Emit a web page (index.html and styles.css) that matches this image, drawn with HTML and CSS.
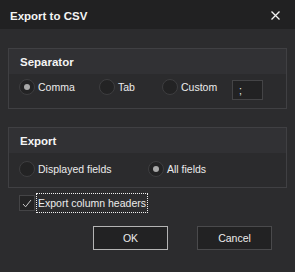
FILE: index.html
```html
<!DOCTYPE html>
<html>
<head>
<meta charset="utf-8">
<link rel="stylesheet" href="styles.css">
</head>
<body>
<div class="dialog">
  <div class="titlebar">
    <span class="title">Export to CSV</span>
    <svg class="close" width="9" height="9" viewBox="0 0 9 9"><path d="M0.5 0.5 L8.5 8.5 M8.5 0.5 L0.5 8.5" stroke="#f2f2f2" stroke-width="1.3" fill="none"/></svg>
  </div>
  <div class="content">
    <div class="group">
      <div class="group-head">Separator</div>
      <div class="group-body sep-body">
        <label class="opt w-comma"><span class="radio checked"></span><span>Comma</span></label>
        <label class="opt w-tab"><span class="radio"></span><span>Tab</span></label>
        <label class="opt w-custom"><span class="radio"></span><span>Custom</span></label>
        <span class="input">;</span>
      </div>
    </div>
    <div class="group group-export">
      <div class="group-head">Export</div>
      <div class="group-body exp-body">
        <label class="opt w-disp"><span class="radio"></span><span>Displayed fields</span></label>
        <label class="opt"><span class="radio checked"></span><span>All fields</span></label>
      </div>
    </div>
    <div class="check-row">
      <span class="checkbox"><svg width="10" height="9" viewBox="0 0 10 9"><path d="M1 5 L3.6 7.8 L9 1" stroke="#c8c8c8" stroke-width="1" fill="none"/></svg></span>
      <span class="focus">Export column headers</span>
    </div>
    <div class="buttons">
      <button class="btn btn-default">OK</button>
      <button class="btn">Cancel</button>
    </div>
  </div>
</div>
</body>
</html>
```
FILE: styles.css
```css
html, body {
  margin: 0;
  padding: 0;
  background: #2c2c2e;
}
body {
  width: 295px;
  height: 272px;
  overflow: hidden;
  font-family: "Liberation Sans", Arial, sans-serif;
  font-size: 10.5px;
  color: #ececec;
}
.titlebar {
  height: 29px;
  background: #212122;
  display: flex;
  align-items: center;
  justify-content: space-between;
  padding: 0 15px 0 10px;
  box-sizing: border-box;
}
.title {
  font-weight: bold;
  font-size: 11.5px;
  color: #f4f4f4;
  position: relative;
  top: 1px;
}
.close {
  display: block;
  position: relative;
  top: 1px;
}
.content {
  padding: 19px 8px 0 8px;
}
.group {
  border: 1px solid #404043;
  background: #2b2b2d;
}
.group-export {
  margin-top: 18px;
}
.group-head {
  height: 25px;
  background: #313134;
  font-weight: bold;
  font-size: 11.5px;
  color: #f4f4f4;
  display: flex;
  align-items: center;
  padding-left: 11px;
}
.group-body {
  display: flex;
  padding-left: 10px;
  box-sizing: border-box;
  height: 34px;
}
.sep-body {
  align-items: flex-start;
  padding-top: 5px;
}
.exp-body {
  align-items: flex-start;
  padding-top: 8px;
}
.opt {
  display: flex;
  align-items: center;
  gap: 3px;
  height: 16px;
}
.w-comma { width: 80px; }
.w-tab { width: 63px; }
.w-custom { width: 70px; }
.w-disp { width: 129px; }
.radio {
  width: 16px;
  height: 16px;
  box-sizing: border-box;
  border-radius: 50%;
  border: 1px solid #3e3e40;
  background: #232324;
  display: flex;
  align-items: center;
  justify-content: center;
}
.radio.checked::after {
  content: "";
  width: 6px;
  height: 6px;
  border-radius: 50%;
  background: #a9a9a9;
}
.input {
  width: 31px;
  height: 20px;
  box-sizing: border-box;
  border: 1px solid #444446;
  background: #222223;
  padding-left: 6px;
  line-height: 18px;
  margin-top: 1px;
}
.check-row {
  display: flex;
  align-items: center;
  padding-left: 11px;
  margin-top: 6px;
  gap: 2px;
}
.checkbox {
  width: 16px;
  height: 16px;
  box-sizing: border-box;
  border: 1px solid #444446;
  background: #232324;
  display: flex;
  align-items: center;
  justify-content: center;
}
.focus {
  outline: 1px dotted #f0f0f0;
  padding: 2px 1px 2px 1px;
  line-height: 14px;
}
.buttons {
  display: flex;
  justify-content: flex-end;
  gap: 29px;
  padding-right: 15px;
  margin-top: 14px;
}
.btn {
  width: 75px;
  height: 24px;
  background: #222223;
  border: 1px solid #4a4a4c;
  color: #ececec;
  font-family: "Liberation Sans", Arial, sans-serif;
  font-size: 10.5px;
  padding: 0;
}
.btn-default {
  border-color: #b4b4b4;
}
```
